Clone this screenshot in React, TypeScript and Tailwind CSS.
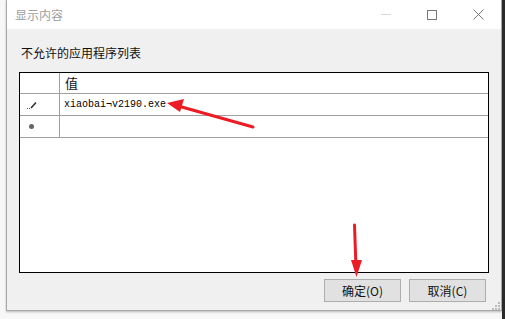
import React from "react";

export default function App() {
  const cjk = { fontFamily: '"Noto Sans CJK SC", sans-serif' };
  return (
    <div className="relative flex w-[505px] h-[319px] bg-[#f7f7f7] overflow-hidden">
      <div className="w-[6px] shrink-0" />
      <div className="flex flex-col w-[496px] h-[311px] border-l border-r border-b border-[#a8a8a8] shadow-[0_1px_2px_rgba(0,0,0,0.25)] bg-[#f0f0f0]">
        {/* title bar */}
        <div className="flex items-center h-[29px] bg-white shrink-0">
          <span className="pl-[8px] text-[12px] text-[#a0a0a0] leading-none" style={cjk}>显示内容</span>
          <div className="flex-1" />
          <div className="flex items-center h-full">
            <div className="w-[46px] h-full flex items-center justify-center">
              <div className="w-[10px] h-px bg-[#d8d8d8]" />
            </div>
            <div className="w-[46px] h-full flex items-center justify-center">
              <div className="w-[10px] h-[10px] border border-[#777]" />
            </div>
            <div className="w-[46px] h-full flex items-center justify-center">
              <svg width="11" height="11" viewBox="0 0 11 11">
                <path d="M0.5 0.5 L10.5 10.5 M10.5 0.5 L0.5 10.5" stroke="#777" strokeWidth="1" />
              </svg>
            </div>
          </div>
        </div>
        {/* content */}
        <div className="flex flex-col flex-1 pl-[12px] pr-[12px]">
          <div className="pt-[16px] pl-[2px] text-[12px] leading-[16px] text-[#111]" style={cjk}>不允许的应用程序列表</div>
          <div className="mt-[11px] w-[470px] h-[201px] border border-black bg-white flex flex-col">
            {/* header */}
            <div className="flex h-[21px] border-b border-[#a0a0a0]">
              <div className="w-[40px] border-r border-[#a0a0a0]" />
              <div className="flex items-center pl-[5px] text-[13px] text-[#111]" style={cjk}>值</div>
            </div>
            <div className="flex h-[22px] border-b border-[#a0a0a0]">
              <div className="w-[40px] border-r border-[#a0a0a0] flex items-center pl-[7px]">
                <svg width="10" height="8" viewBox="0 0 10 8">
                  <rect x="0" y="7" width="1" height="1" fill="#555" />
                  <rect x="2" y="7" width="1" height="1" fill="#555" />
                  <path d="M4 7 L9 1.5" stroke="#333" strokeWidth="1.6" />
                </svg>
              </div>
              <div className="flex items-center pl-[4px] text-[10px] text-black" style={{ fontFamily: '"Liberation Mono", monospace' }}>
                xiaobai¬v2190.exe
              </div>
            </div>
            <div className="flex h-[22px] border-b border-[#a0a0a0]">
              <div className="w-[40px] border-r border-[#a0a0a0] flex items-center pl-[9px]">
                <div className="w-[5px] h-[5px] rounded-full bg-[#666]" />
              </div>
              <div />
            </div>
          </div>
          <div className="flex justify-end gap-[8px] mt-[6px] pr-[3px]">
            <button className="w-[77px] h-[23px] bg-[#e1e1e1] border border-[#adadad] text-[12px] text-[#111]" style={cjk}>确定(O)</button>
            <button className="w-[77px] h-[23px] bg-[#e1e1e1] border border-[#adadad] text-[12px] text-[#111]" style={cjk}>取消(C)</button>
          </div>
          <div className="flex-1 flex items-end justify-end -mr-[11px] pb-[1px]">
            <svg width="8" height="8" viewBox="0 0 8 8">
              <rect x="6" y="0" width="2" height="2" fill="#bbb" />
              <rect x="3" y="3" width="2" height="2" fill="#bbb" />
              <rect x="6" y="3" width="2" height="2" fill="#bbb" />
              <rect x="0" y="6" width="2" height="2" fill="#bbb" />
              <rect x="3" y="6" width="2" height="2" fill="#bbb" />
              <rect x="6" y="6" width="2" height="2" fill="#bbb" />
            </svg>
          </div>
        </div>
      </div>
      <div className="flex-1 bg-[#2b2b2b]" />
      {/* arrows overlay */}
      <svg className="absolute inset-0 pointer-events-none" width="505" height="319" viewBox="0 0 505 319">
        <line x1="253" y1="127" x2="180" y2="106.5" stroke="#ec1c24" strokeWidth="3" strokeLinecap="round" />
        <polygon points="167,103 184,99 180,112" fill="#ec1c24" />
        <line x1="354.5" y1="225" x2="355.8" y2="262" stroke="#ec1c24" strokeWidth="3" strokeLinecap="round" />
        <polygon points="356.5,277 351,260 362,260" fill="#ec1c24" />
      </svg>
    </div>
  );
}
